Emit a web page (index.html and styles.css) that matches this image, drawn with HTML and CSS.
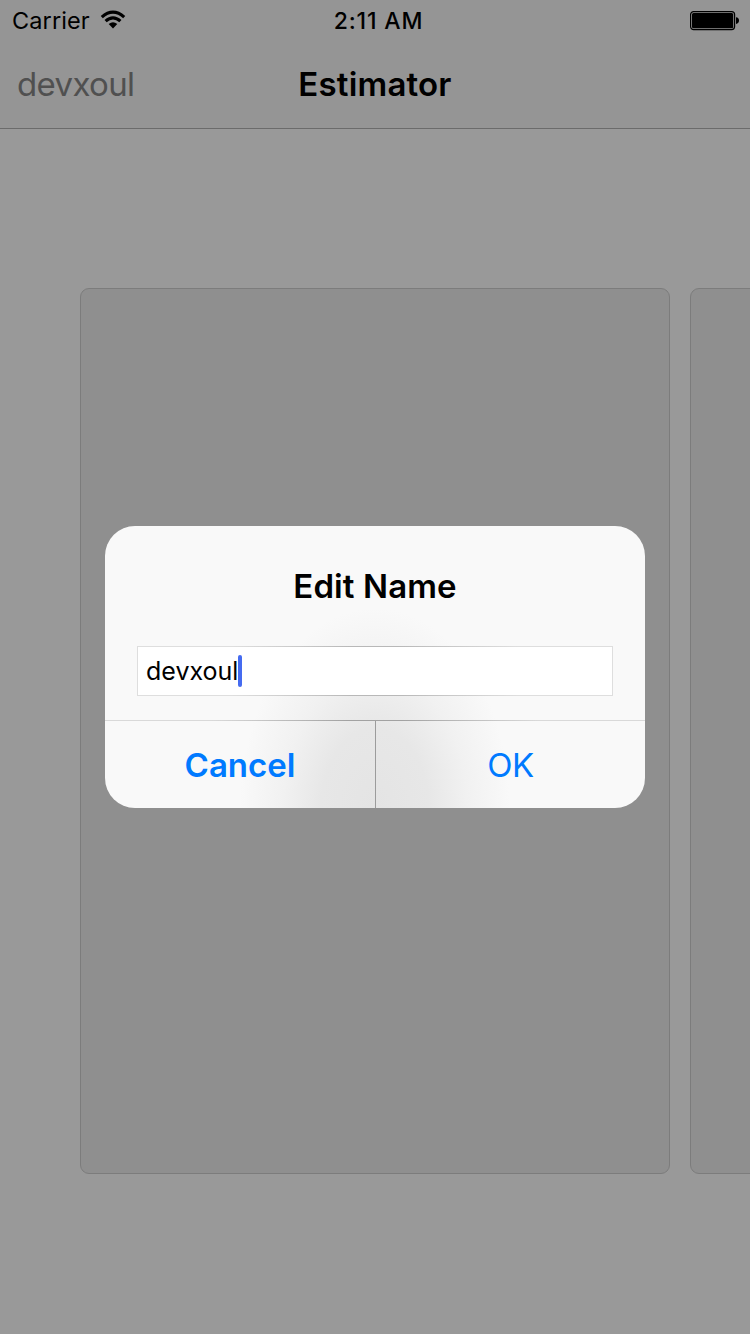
FILE: index.html
```html
<!DOCTYPE html>
<html lang="en">
<head>
<meta charset="utf-8">
<title>Estimator</title>
<link rel="stylesheet" href="styles.css">
</head>
<body>
<div class="screen">
  <header class="top">
    <div class="status">
      <div class="network">
        <span class="carrier">Carrier</span>
        <svg class="wifi" width="26" height="20" viewBox="0 0 26 20">
          <path d="M1.8 7.1Q13 -2.7 24.2 7.1M5.6 11.1Q13 4.5 20.4 11.1" fill="none" stroke="#000" stroke-width="3.2"/>
          <path d="M8.7 14Q13 10.4 17.3 14L13 18.6Z"/>
        </svg>
      </div>
      <span class="time">2:11 AM</span>
      <svg class="battery" width="50" height="20" viewBox="0 0 50 20">
        <rect x=".6" y=".6" width="44" height="18" rx="3" fill="none" stroke="#000" stroke-width="1.2"/>
        <rect x="2" y="2" width="41.2" height="15.2" rx="1.5"/>
        <path d="M46 6.2Q49 6.6 49 9.6T46 13Z"/>
      </svg>
    </div>
    <nav class="nav">
      <span class="user">devxoul</span>
      <h1 class="title">Estimator</h1>
      <span></span>
    </nav>
  </header>
  <main class="cards">
    <div class="card"></div>
    <div class="card"></div>
  </main>
</div>
<div class="overlay">
  <section class="dialog">
    <div class="content">
      <h2 class="heading">Edit Name</h2>
      <div class="field"><span class="value">devxoul</span><i class="caret"></i></div>
    </div>
    <div class="actions">
      <button class="action cancel">Cancel</button>
      <button class="action ok">OK</button>
    </div>
  </section>
</div>
</body>
</html>
```
FILE: styles.css
```css
* { box-sizing: border-box; }
body { margin: 0; overflow: hidden; font-family: Inter, "Liberation Sans", sans-serif; color: #000; }
.screen { width: 750px; height: 1334px; background: #999; display: flex; flex-direction: column; overflow: hidden; }
.top { height: 129px; flex: none; background: #959595; border-bottom: 1px solid #6b6b6b; }
.status { height: 42px; padding: 0 11px 0 12px; display: grid; grid-template-columns: 1fr auto 1fr; align-items: center; line-height: 42px; }
.network { display: flex; align-items: center; gap: 10px; }
.carrier { font-size: 23.5px; letter-spacing: .1px; }
.wifi { margin-top: -2px; }
.time { font-size: 23px; font-weight: 550; letter-spacing: .85px; padding-left: 6px; }
.battery { justify-self: end; margin-right: -1px; }
.nav { height: 84px; padding: 0 17px; display: grid; grid-template-columns: 1fr auto 1fr; align-items: center; }
.user { font-size: 33px; letter-spacing: -.65px; color: #505050; }
.title { margin: 0; font-size: 33px; font-weight: 580; letter-spacing: .2px; }
.cards { display: flex; gap: 20px; padding: 159px 0 0 80px; }
.card { flex: none; width: 590px; height: 886px; background: #8f8f8f; border: 1px solid #7c7c7c; border-radius: 9px; }
.overlay { position: absolute; inset: 0; width: 750px; height: 1334px; display: grid; place-items: center; }
.dialog {
  width: 540px; height: 282px; border-radius: 30px; overflow: hidden;
  background: radial-gradient(ellipse 135px 200px at 50% 100%, #e4e4e4 0%, #e7e7e7 40%, #f1f1f1 68%, rgba(249,249,249,0) 100%), #f9f9f9;
}
.content { height: 194px; padding: 36px 32px 0; }
.heading { margin: 0 0 36px; height: 48px; line-height: 48px; text-align: center; font-size: 33px; font-weight: 580; letter-spacing: .1px; }
.field { height: 50px; padding-left: 8px; background: #fff; background-clip: padding-box; border: 1px solid transparent; border-image: linear-gradient(90deg, #dedede 20%, #b8b8b8 45%, #b8b8b8 55%, #dedede 80%) 1; display: flex; align-items: center; }
.value { font-size: 25px; }
.caret { width: 4px; height: 32px; border-radius: 2px; background: #456bf0; }
.actions { height: 88px; display: grid; grid-template-columns: 271px 1fr; border-top: 1px solid transparent; border-image: linear-gradient(90deg, #d9d9d9 20%, #a2a2a2 45%, #a2a2a2 55%, #d9d9d9 80%) 1; }
.action { border: 0; padding: 0; background: none; color: #007aff; font-family: inherit; font-size: 33px; }
.cancel { border-right: 1px solid #9c9c9c; font-weight: 580; }
.ok { letter-spacing: -.5px; }
```
